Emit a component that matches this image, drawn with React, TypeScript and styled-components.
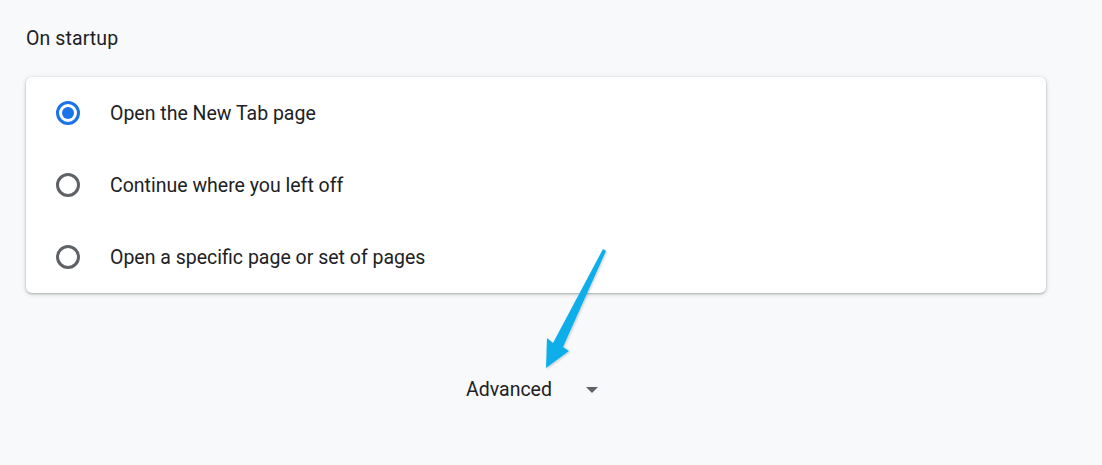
import * as React from "react"
import styled, { createGlobalStyle } from "styled-components"

const GlobalStyle = createGlobalStyle`
  html, body {
    margin: 0;
    padding: 0;
    background: #f8f9fa;
    font-family: Roboto, "Liberation Sans", sans-serif;
    color: #202124;
  }
`

const Page = styled.div`
  position: relative;
  width: 1102px;
  height: 465px;
  padding: 0 0 0 26px;
  box-sizing: border-box;
  overflow: hidden;
`
const Column = styled.div`
  width: 1020px;
  display: flex;
  flex-direction: column;
`
const SectionTitle = styled.h2`
  margin: 0;
  padding-top: 27px;
  height: 77px;
  box-sizing: border-box;
  font-size: 19.5px;
  font-weight: 400;
  line-height: 24px;
  color: #202124;
  letter-spacing: 0.1px;
`
const Card = styled.div`
  background: #fff;
  border-radius: 6px;
  box-shadow: 0 1px 2px rgba(60, 64, 67, 0.3), 0 1px 4px 1px rgba(60, 64, 67, 0.15);
  display: flex;
  flex-direction: column;
`
const Row = styled.label`
  height: 72px;
  display: flex;
  align-items: center;
  padding-left: 30px;
  gap: 30px;
  font-size: 19.5px;
  color: #202124;
  cursor: pointer;
`
const Radio = styled.span<{ $checked?: boolean }>`
  width: 24px;
  height: 24px;
  box-sizing: border-box;
  border-radius: 50%;
  border: 3px solid ${(p) => (p.$checked ? "#1a73e8" : "#5f6368")};
  display: flex;
  align-items: center;
  justify-content: center;
  flex-shrink: 0;

  &::after {
    content: "";
    width: 12px;
    height: 12px;
    border-radius: 50%;
    background: #1a73e8;
    display: ${(p) => (p.$checked ? "block" : "none")};
  }
`
const AdvancedRow = styled.div`
  margin-top: 85px;
  display: flex;
  justify-content: center;
  padding-right: 8px;
`
const AdvancedButton = styled.button`
  border: none;
  background: none;
  padding: 0;
  display: flex;
  align-items: center;
  gap: 34px;
  font-family: inherit;
  font-size: 19.5px;
  color: #202124;
  cursor: pointer;
`
const Caret = styled.span`
  width: 0;
  height: 0;
  border-left: 6px solid transparent;
  border-right: 6px solid transparent;
  border-top: 6px solid #5f6368;
`
const Pointer = styled.svg`
  position: absolute;
  left: 0;
  top: 0;
  pointer-events: none;
`

const options = [
  "Open the New Tab page",
  "Continue where you left off",
  "Open a specific page or set of pages",
]

export default function App() {
  const [selected, setSelected] = React.useState(0)

  return (
    <Page>
      <GlobalStyle />
      <Column>
        <SectionTitle>On startup</SectionTitle>
        <Card>
          {options.map((label, i) => (
            <Row key={label} onClick={() => setSelected(i)}>
              <Radio $checked={selected === i} />
              {label}
            </Row>
          ))}
        </Card>
        <AdvancedRow>
          <AdvancedButton>
            Advanced
            <Caret />
          </AdvancedButton>
        </AdvancedRow>
      </Column>
      <Pointer width="1102" height="465">
        <defs>
          <filter id="sh" x="-50%" y="-50%" width="200%" height="200%">
            <feDropShadow dx="1" dy="1" stdDeviation="1" floodColor="#000" floodOpacity="0.2" />
          </filter>
        </defs>
        <polygon
          points="603,249 606,251 563,347 569,351 546,368 547,338 553,343"
          fill="#0faeea"
          filter="url(#sh)"
        />
      </Pointer>
    </Page>
  )
}
